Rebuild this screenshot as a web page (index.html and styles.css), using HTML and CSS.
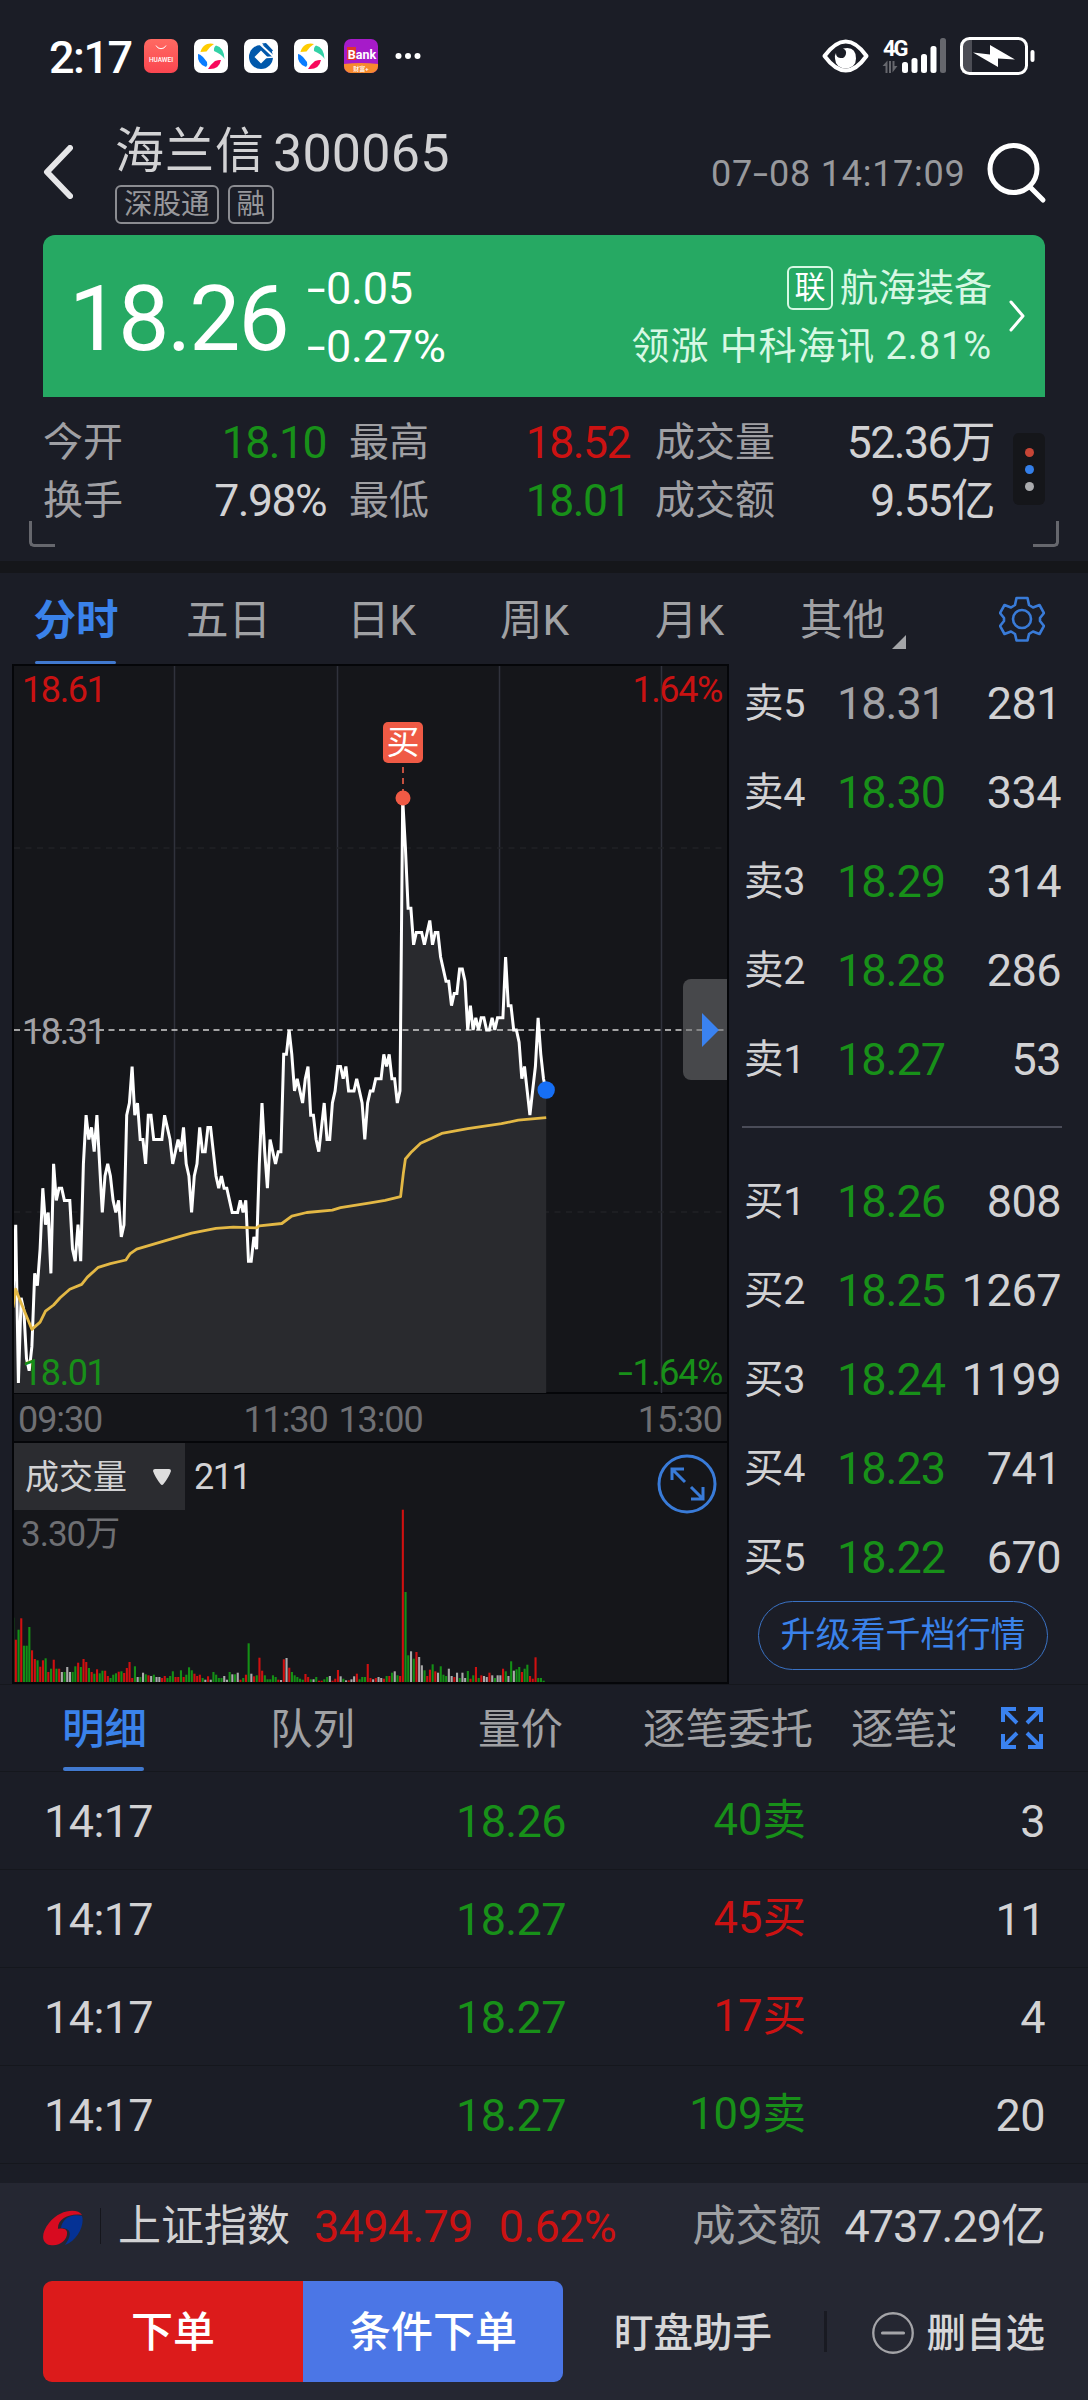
FILE: index.html
```html
<!DOCTYPE html>
<html lang="zh-CN">
<head>
<meta charset="utf-8">
<title>海兰信 300065</title>
<link rel="stylesheet" href="styles.css">
</head>
<body>
<div class="screen">
  <header class="status">
    <span class="clock">2:17</span>
    <div class="apps">
      <svg viewBox="0 0 34 34"><defs><linearGradient id="hw" x2="0" y2="1"><stop stop-color="#ff6a62"/><stop offset="1" stop-color="#fb4650"/></linearGradient></defs><rect width="34" height="34" rx="7" fill="url(#hw)"/><path d="M12 6.500a5.500 5.500 0 0 0 10 0" fill="none" stroke="#fff" stroke-width="1"/><text x="17" y="22.500" class="hw">HUAWEI</text></svg>
      <svg viewBox="0 0 34 34"><rect width="34" height="34" rx="7" fill="#fff"/><path fill="#fc0" d="M6.500 13C8 6.500 14 3 20 5q-5 3-7.500 7.500Z"/><path fill="#32d2a6" d="M20 12q-.5-4 2-5.500 8 2 8.500 13.500-3-5-10.500-8Z"/><path fill="#f8095c" d="M14 30q2-4 7-8 4-1.500 6-1Q25 31 14 30Z"/><path fill="#087cff" d="M4 15q2 0 5 3l4 5q1 3-1 5Q3 25 4 15Z"/></svg>
      <svg viewBox="0 0 34 34"><rect width="34" height="34" rx="7" fill="#fff"/><circle cx="17" cy="18" r="12" fill="#0058ab"/><path d="m17 11.500 6.500 6.500-6.500 6.500-6.500-6.500Z" fill="#fff"/><path d="m16 5 14 13" stroke="#fff" stroke-width="2"/><path d="m22 18.500 8-.5" stroke="#fff" stroke-width="1.500"/><path d="m18 4.500 4-.5 7 7.500-2 2Z" fill="#0058ab"/></svg>
      <svg viewBox="0 0 34 34"><rect width="34" height="34" rx="7" fill="#fff"/><path fill="#fc0" d="M6.500 13C8 6.500 14 3 20 5q-5 3-7.500 7.500Z"/><path fill="#32d2a6" d="M20 12q-.5-4 2-5.500 8 2 8.500 13.500-3-5-10.500-8Z"/><path fill="#f8095c" d="M14 30q2-4 7-8 4-1.500 6-1Q25 31 14 30Z"/><path fill="#087cff" d="M4 15q2 0 5 3l4 5q1 3-1 5Q3 25 4 15Z"/></svg>
      <svg viewBox="0 0 34 34"><defs><clipPath id="bk"><rect width="34" height="34" rx="7"/></clipPath></defs><g clip-path="url(#bk)"><path fill="#a61bc9" d="M0 0h34v34H0z"/><path fill="#f78a2e" d="M0 25q17-2 34 0v9H0z"/><path fill="#e0362c" d="M3 8h9v13H3z"/></g><text x="18" y="20" class="bank">Bank</text><text x="17" y="32" class="wealth">财富+</text></svg>
    </div>
    <svg class="more" viewBox="0 0 26 8" fill="#fff"><circle cx="3.500" cy="4" r="3"/><circle cx="13" cy="4" r="3"/><circle cx="22.500" cy="4" r="3"/></svg>
    <svg class="sys" viewBox="0 0 220 40">
      <path d="M3.500 20Q25-9 45.500 20 25 49 3.500 20Z" fill="none" stroke="#fff" stroke-width="4" stroke-linejoin="round"/>
      <path d="M22 12.500q13-3 13 10 0 9-10.500 10-10-1-10.500-10-.5-3 1-5.500a5 5 0 1 0 7-4.500Z" fill="#fff"/>
      <text x="62" y="20" class="net">4G</text>
      <path d="m61.500 30 5-5.500V37h-2v-7Zm15 0-5 6.500V25h2v5ZM68 25h2v12h-2z" fill="#66676d"/>
      <g fill="#fff"><rect x="81" y="26" width="6" height="11" rx="2.500"/><rect x="90.500" y="22" width="6" height="15" rx="2.500"/><rect x="100" y="18" width="6" height="19" rx="2.500"/><rect x="109.500" y="10" width="6" height="27" rx="2.500"/></g>
      <rect x="119" y="2" width="6" height="35" rx="2.500" fill="#66676d"/>
      <path d="M141 4h10v33h-10z" fill="#4c4d55"/>
      <rect x="140.500" y="2.500" width="65" height="35" rx="8" fill="none" stroke="#fff" stroke-width="3"/>
      <rect x="209.500" y="14" width="4" height="12" rx="2" fill="#fff"/>
      <path d="m152 16.500 17 2V9l25 14.500-17-1V31Z" fill="#fff"/>
    </svg>
  </header>

  <section class="title">
    <svg class="back" viewBox="0 0 30 54"><path d="M27 3 4 27l23 24" fill="none" stroke="#e6e6e8" stroke-width="6" stroke-linecap="round" stroke-linejoin="round"/></svg>
    <div class="name">
      <h1>海兰信<b>300065</b></h1>
      <div class="tags"><span>深股通</span><span>融</span></div>
    </div>
    <time>07<u>-</u>08 14:17:09</time>
    <svg class="search" viewBox="0 0 60 62"><circle cx="26.500" cy="27" r="23.500" fill="none" stroke="#fff" stroke-width="5"/><path d="m43 45 13 13" stroke="#fff" stroke-width="5" stroke-linecap="round"/></svg>
  </section>

  <section class="quote">
    <strong>18.26</strong>
    <div class="change"><span><u>-</u>0.05</span><span><u>-</u>0.27%</span></div>
    <div class="sector">
      <div><i>联</i>航海装备</div>
      <div class="lead">领涨 中科海讯 2.81%</div>
    </div>
    <svg viewBox="0 0 16 34"><path d="m2 3 12 14L2 31" fill="none" stroke="#fff" stroke-width="3" stroke-linecap="round" stroke-linejoin="round"/></svg>
  </section>

  <section class="stats">
    <div class="grid">
      <span>今开</span><em class="down">18.10</em><span>最高</span><em class="up">18.52</em><span>成交量</span><em>52.36万</em>
      <span>换手</span><em>7.98%</em><span>最低</span><em class="down">18.01</em><span>成交额</span><em>9.55亿</em>
    </div>
    <div class="dots"><i></i><i></i><i></i></div>
    <span class="corner left"></span><span class="corner right"></span>
  </section>

  <nav class="periods">
    <a class="on">分时</a><a>五日</a><a>日K</a><a>周K</a><a>月K</a><a class="other">其他</a>
    <svg class="gear" viewBox="0 0 46 46" fill="none" stroke="#397bd8" stroke-width="2.600" stroke-linejoin="round"><path d="M17.500 2h11l1.500 7 4 2.500 6.500-2.500 4.500 8-4 5v3l4 5-4.500 8-6.500-2.500-4 2.500-1.500 6.500h-11L16 38l-4-2.500L5.500 38 1 30l4-5v-3l-4-5 4.500-8 6.500 2.500L16 9Z"/><circle cx="23" cy="23" r="9"/></svg>
  </nav>

  <main class="market">
    <div class="charts">
      <div class="price">
        <svg class="plot" viewBox="0 0 712 727" id="plot"></svg>
        <span class="lab tl up">18.61</span><span class="lab tr up">1.64%</span>
        <span class="lab ml">18.31</span>
        <span class="lab bl down">18.01</span><span class="lab br down"><u>-</u>1.64%</span>
        <span class="buy">买</span>
        <span class="handle"></span>
      </div>
      <div class="axis"><span>09:30</span><span>11:30 13:00</span><span>15:30</span></div>
      <div class="volume">
        <div class="vhead"><span class="pick">成交量<svg viewBox="0 0 18 16"><path d="M2 0h14q2 0 2 2-2 6-7.500 13-1.500 2-3 0Q2 8 0 2q0-2 2-2Z" fill="#ddd"/></svg></span><span>211</span></div>
        <span class="vmax">3.30万</span>
        <svg class="zoomer" viewBox="0 0 60 60" fill="none" stroke="#397bd8" stroke-width="3"><circle cx="30" cy="30" r="28"/><path d="M15 26V15h12M16 16l12 12M34 33l12 12M46 33v12H34"/></svg>
        <svg class="bars" viewBox="0 0 712 173" id="bars"></svg>
      </div>
    </div>
    <aside class="book">
      <div class="side">
        <p><span>卖5</span><em class="flat">18.31</em><b>281</b></p>
        <p><span>卖4</span><em>18.30</em><b>334</b></p>
        <p><span>卖3</span><em>18.29</em><b>314</b></p>
        <p><span>卖2</span><em>18.28</em><b>286</b></p>
        <p><span>卖1</span><em>18.27</em><b>53</b></p>
      </div>
      <hr>
      <div class="side">
        <p><span>买1</span><em>18.26</em><b>808</b></p>
        <p><span>买2</span><em>18.25</em><b>1267</b></p>
        <p><span>买3</span><em>18.24</em><b>1199</b></p>
        <p><span>买4</span><em>18.23</em><b>741</b></p>
        <p><span>买5</span><em>18.22</em><b>670</b></p>
      </div>
      <a class="upgrade">升级看千档行情</a>
    </aside>
  </main>

  <nav class="details">
    <div class="tabs"><a class="on">明细</a><a>队列</a><a>量价</a><a>逐笔委托</a><a>逐笔还原</a></div>
    <svg viewBox="0 0 42 42" fill="none" stroke="#3a82f0" stroke-width="4"><path d="M2 15V2h13M2 2l14 14M27 2h13v13M40 2 26 16M2 27v13h13M2 40l14-14M27 40h13V27M40 40 26 26"/></svg>
  </nav>

  <section class="ticks">
    <p><span>14:17</span><em class="down">18.26</em><em class="down">40卖</em><b>3</b></p>
    <p><span>14:17</span><em class="down">18.27</em><em class="up">45买</em><b>11</b></p>
    <p><span>14:17</span><em class="down">18.27</em><em class="up">17买</em><b>4</b></p>
    <p><span>14:17</span><em class="down">18.27</em><em class="down">109卖</em><b>20</b></p>
  </section>

  <footer>
    <div class="index">
      <svg class="logo" viewBox="0 0 40 36"><path fill="#d80b20" d="M39 5C35-2 17-1 6 13-2 23-2 33 7 35c10 2 18-6 17-13-1-5-9-3-9-3C14 9 27 3 39 5Z"/><path fill="#053295" d="M39 6c3 9-5 25-17 29 6-8 8-17-4-17 1-9 10-15 21-12Z"/></svg>
      <i class="sep"></i>
      <span class="iname">上证指数</span><em class="up ival">3494.79</em><em class="up">0.62%</em>
      <span class="turn">成交额</span><b>4737.29亿</b>
    </div>
    <div class="actions">
      <a class="order">下单</a><a class="cond">条件下单</a>
      <span class="watch">盯盘助手</span><i class="sep"></i>
      <svg viewBox="0 0 40 40" fill="none" stroke="#a4a4a8" stroke-width="2.200"><circle cx="20" cy="20" r="18.800"/><path d="M10 20h20" stroke-width="3" stroke-linecap="round"/></svg>
      <span class="remove">删自选</span>
    </div>
  </footer>
</div>
<script src="chart.js"></script>
</body>
</html>
```
FILE: chart.js
```js
// One value per trading minute, in cents relative to the previous close of 18.31.
const prices = [-22,-16,-29,-22,-23,-27,-28,-26,-20,-21,-18,-13,-16,-15,-20,-11,-14,-13,-13,-14,
-14,-14,-18,-19,-16,-19,-11,-7,-9,-8,-10,-7,-11,-15,-12,-11,-12,-14,-15,-14,
-17,-16,-7,-6,-3,-7,-6,-9,-9,-11,-7,-7,-9,-9,-9,-9,-7,-8,-9,-11,
-10,-9,-10,-8,-11,-12,-15,-12,-11,-8,-10,-10,-8,-8,-10,-12,-13,-12,-13,-13,
-14,-15,-15,-15,-14,-15,-14,-19,-19,-17,-18,-11,-6,-10,-13,-9,-10,-11,-10,-10,
-2,-2,0,-2,-5,-4,-5,-6,-4,-3,-7,-7,-9,-10,-8,-6,-9,-9,-6,-5,
-3,-3,-4,-3,-5,-5,-5,-4,-5,-6,-9,-6,-5,-5,-4,-4,-4,-2,-3,-2,
-4,-4,-6,-5,19,15,10,10,7,8,8,8,7,8,9,7,8,8,6,5,
4,4,2,3,3,5,5,4,0,2,0,1,0,1,1,0,0,1,0,1,
1,1,6,2,2,0,0,-1,-4,-3,-5,-7,-5,-3,1,-2,-4,-5];

// Average price: [minute, cents].
const average = [[0,-22.8],[1,-21.3],[2.6,-22.2],[4.4,-23.2],[7,-24.6],[10,-24],[12,-23.1],[15,-22.6],[17.4,-22],[21,-21.3],
[25.4,-20.9],[27.5,-20.3],[31.5,-19.5],[36,-19.2],[41.7,-18.9],[43.2,-18.4],[45.7,-18],[52,-17.6],[59.5,-17.1],[66,-16.7],
[75,-16.3],[81.4,-16.2],[90,-16.25],[91,-16.1],[99.3,-15.9],[103,-15.3],[108.5,-15],[118,-14.8],[121,-14.6],[132,-14.2],
[137.5,-14],[143.2,-13.7],[144.2,-11.8],[145,-10.6],[147.3,-10],[150.6,-9.3],[154.7,-8.9],[158.4,-8.5],[168,-8.1],
[180.5,-7.7],[186.7,-7.4],[197,-7.2]];

// Volume per minute, height and colour (g falling, r rising, w unchanged).
const volumes = ("193g 127r 157g 191r 109g 109g 165g 95r 69r 65g 46r 65r 71g 30r 40g 67r 40g 40r 30w 30g 45w 30w 30g 47g 58r 45g 69r 60r 42g 30r " +
"25g 38r 26g 34g 34r 18r 12g 22g 26g 31r 32g 27r 42r 60r 12r 47g 15w 15g 28w 23g 20r 18w 22g 15w 15w 12r 18r 12g 18g 32g " +
"15r 15r 35g 15r 22g 44g 35g 25r 18r 22r 12g 7w 17r 7w 30g 22g 12g 12g 18w 7w 30g 23w 23g 28w 7r 12g 22r 116g 25w 17r " +
"20g 73r 34r 20g 8g 8g 20g 15g 7r 6w 68r 72w 43r 30g 20g 15g 10g 7g 24r 15r 8g 8w 15g 4r 4r 8g 15g 18w 4r 10r " +
"36r 17w 10g 5w 5r 8w 17w 25r 8g 15g 15g 54r 12r 8w 12r 15w 12w 10r 18g 18r 28g 32w 20g 18r 517r 270g 80g 92w 70g 90r " +
"75w 50w 35g 18r 37r 53g 32r 28w 47g 22g 18g 40w 18w 15r 28w 12g 28w 12w 33g 10r 20g 45r 12g 20r 18w 15w 28r 20w 12g 20w " +
"20w 40r 32g 18w 62g 34w 38g 45g 30r 40g 52g 18r 10r 74r 12g 12g 4g").split(" ");

const STEP = 2.7065, MID = 364, CENT = 12.17;
const px = m => (m * STEP - 1).toFixed(1);
const py = c => (MID - c * CENT).toFixed(1);
const line = prices.map((c, m) => px(m) + "," + py(c)).join(" ");
const lastX = px(prices.length - 1);

document.getElementById("plot").innerHTML =
  [160, 323, 485, 647].map(x => `<path d="M${x}.500 0V727" stroke="#30323c" stroke-width="1.500"/>`).join("") +
  [182, 546].map(y => `<path d="M0 ${y}H712" stroke="#202226" stroke-width="1.500" stroke-dasharray="6 5.500"/>`).join("") +
  `<polygon points="0,727 ${line} ${lastX},727" fill="#292a2e"/>` +
  `<path d="M0 ${MID}H712" stroke="#d2d2d2" stroke-width="1.500" stroke-dasharray="6 4.500"/>` +
  `<polyline points="${line}" fill="none" stroke="#fff" stroke-width="3"/>` +
  `<polyline points="${average.map(([m, c]) => px(m) + "," + py(c)).join(" ")}" fill="none" stroke="#e3b845" stroke-width="2.800" stroke-linejoin="round"/>` +
  `<path d="M389 101v24" stroke="#c4503f" stroke-width="2" stroke-dasharray="6 5"/>` +
  `<circle cx="389" cy="132" r="7.500" fill="#ef5a45"/>` +
  `<circle cx="${lastX}" cy="424" r="8.700" fill="#166ff5"/>`;

const fill = { g: "#149016", r: "#cf1010", w: "#aaa" };
document.getElementById("bars").innerHTML = volumes.map((v, m) => {
  const h = parseInt(v) / 3;
  return `<rect x="${(m * STEP - 1.9).toFixed(1)}" y="${(173 - h).toFixed(1)}" width="2.1" height="${h.toFixed(1)}" fill="${fill[v.slice(-1)]}"/>`;
}).join("");
```
FILE: styles.css
```css
* { box-sizing: border-box; margin: 0; padding: 0; }
body { background: #1b1d26; color: #d2d2d4; font-family: Roboto, "Noto Sans CJK SC", sans-serif; font-size: 45px; line-height: 1; }
svg { display: block; flex: none; }
em, i { font-style: normal; }
b { font-weight: 400; }
/* wide minus sign */
u { display: inline-block; text-decoration: none; transform: scaleX(1.5); transform-origin: 0 50%; margin-right: .15em; }
.screen { width: 1088px; height: 2400px; overflow: hidden; display: flex; flex-direction: column; }
.screen > * { flex: none; }
.up { color: #cc1212; }
.down { color: #189019; }

.status { height: 112px; display: flex; align-items: center; padding-left: 49px; }
.clock { width: 95px; color: #fff; font-size: 45px; font-weight: 500; letter-spacing: -1.500px; padding-top: 2px; }
.apps { display: flex; gap: 16px; }
.apps svg { width: 34px; height: 34px; }
.hw, .bank, .wealth { fill: #fff; text-anchor: middle; font-size: 6.500px; font-weight: 500; }
.bank { font-size: 12.500px; font-weight: 700; }
.wealth { font-size: 6px; }
.more { width: 26px; height: 8px; margin-left: 17px; }
.sys { width: 220px; height: 40px; margin: 0 0 0 400px; }
.net { fill: #fff; font-size: 22px; font-weight: 700; letter-spacing: -2px; }

.title { height: 123px; display: flex; padding-left: 43px; }
.back { width: 30px; height: 54px; margin-top: 33px; }
.name { width: 638px; padding-left: 42px; }
h1 { display: flex; align-items: center; height: 76px; padding: 2px 0 0; font-size: 49px; font-weight: 400; letter-spacing: 1px; white-space: nowrap; }
h1 b { font-size: 52px; letter-spacing: .2px; padding: 5px 0 0 8px; }
.tags { display: flex; gap: 9px; margin-top: -3px; }
.tags span { height: 39px; border: 2px solid #8b8c91; border-radius: 6px; padding: 0 7px; color: #98989c; font-size: 28.500px; line-height: 36px; }
time { width: 276px; color: #98999d; font-size: 36px; padding-top: 44px; letter-spacing: .75px; white-space: nowrap; }
.search { width: 60px; height: 62px; margin-top: 30px; }

.quote { height: 162px; margin: 0 43px; background: #26a963; border-radius: 12px 12px 0 0; color: #fff; display: flex; }
.quote strong { font-size: 91px; font-weight: 400; padding: 39px 0 0 26px; width: 264px; letter-spacing: -2px; }
.change { font-size: 45px; padding-top: 31px; display: grid; grid-template-rows: 58px 58px; width: 200px; letter-spacing: -.2px; }
.sector { flex: 1; padding-top: 24px; color: #d7f8e4; font-size: 38px; text-align: right; white-space: nowrap; }
.sector div { height: 58px; display: flex; justify-content: flex-end; align-items: center; gap: 7px; white-space: pre; }
.sector .lead { letter-spacing: .9px; }
.sector i { width: 46px; height: 44px; border: 2px solid #d7f8e4; border-radius: 6px; font-size: 31px; color: #fff; text-align: center; line-height: 40px; }
.quote svg { width: 16px; height: 34px; margin: 64px 20px 0 17px; }

.stats { position: relative; height: 164px; display: flex; padding: 17px 43px 0; }
.grid { width: 951px; display: grid; grid-template-columns: 100px 183px 124px 180px 145px 219px; grid-template-rows: 58px 58px; align-items: center; align-content: start; }
.grid span { color: #a0a0a4; font-size: 40px; white-space: nowrap; }
.grid span:nth-of-type(3n+2) { padding-left: 23px; }
.grid span:nth-of-type(3n) { padding-left: 25px; }
.grid em { text-align: right; font-size: 44.500px; letter-spacing: -1.500px; white-space: nowrap; }
.dots { width: 32px; height: 72px; margin: 19px 0 0 19px; border-radius: 6px; background: #15161a; display: flex; flex-direction: column; align-items: center; justify-content: center; gap: 8px; }
.dots i { width: 9px; height: 9px; border-radius: 50%; background: #c74536; }
.dots i:nth-child(2) { background: #347fe9; }
.dots i:nth-child(3) { background: #aaabae; }
.corner { position: absolute; top: 124px; width: 26px; height: 26px; border: solid #66676d; }
.left { left: 29px; border-width: 0 0 3px 3px; border-bottom-left-radius: 5px; }
.right { right: 29px; border-width: 0 3px 3px 0; border-bottom-right-radius: 5px; }

.periods { border-top: 12px solid #15161a; height: 103px; display: grid; grid-template-columns: 152px 153px 153px 153px 157px 186px 134px; align-items: start; }
.periods a { height: 91px; line-height: 95px; text-align: center; color: #a0a1a4; font-size: 42.500px; white-space: nowrap; position: relative; }
.periods .on { color: #3a82ea; font-weight: 700; }
.periods .on::after { content: ""; position: absolute; left: 35px; bottom: 0; width: 81px; height: 3px; border-radius: 2px; background: #4179cf; }
.periods .other { padding-right: 37px; }
.other::after { content: ""; position: absolute; left: 124px; bottom: 15px; border: solid transparent; border-width: 0 0 14px 14px; border-bottom-color: #a4a5a8; }
.gear { width: 46px; height: 46px; margin: 23px 0 0 45px; }

.market { height: 1020px; display: flex; padding-left: 12px; }
.charts { width: 717px; background: #15161a; outline: 2px solid #050609; outline-offset: -2px; }
.price { position: relative; height: 730px; border: 2px solid #050609; }
.plot { width: 712px; height: 727px; }
.lab { position: absolute; font-size: 36px; color: #a2a2a6; letter-spacing: -1.400px; }
.up.lab { color: #c91212; } .down.lab { color: #189019; }
.tl { left: 8px; top: 6px; } .tr { right: 5px; top: 6px; }
.ml { left: 8px; top: 348px; }
.bl { left: 8px; bottom: 1px; } .br { right: 5px; bottom: 1px; }
.buy { position: absolute; left: 369px; top: 56px; width: 40px; height: 41px; background: #ef5a45; border-radius: 5px; color: #fff; font-size: 33px; line-height: 42px; text-align: center; }
.handle { position: absolute; right: 0; top: 313px; width: 44px; height: 101px; border-radius: 8px 0 0 8px; background: #6e6f7190; }
.handle::after { content: ""; position: absolute; left: 19px; top: 34px; border: solid transparent; border-width: 17px 0 17px 17px; border-left-color: #3a82f0; }
.axis { height: 47px; display: grid; grid-template-columns: 1fr auto 1fr; padding: 8px 5px 0 4px; color: #6e6f73; font-size: 36px; letter-spacing: -1.100px; border: solid #050609; border-width: 0 2px; }
.axis span:nth-child(2) { padding-right: 71px; word-spacing: 3px; margin-left: -3px; }
.axis span:last-child { text-align: right; }
.volume { position: relative; height: 243px; border: 2px solid #050609; }
.vhead { display: flex; align-items: center; height: 67px; font-size: 36px; gap: 9px; letter-spacing: -1.500px; }
.pick { width: 171px; height: 67px; background: #2b2c30; display: flex; align-items: center; gap: 26px; padding-left: 11px; font-size: 34px; letter-spacing: 0; }
.pick svg { width: 18px; height: 16px; }
.vmax { display: block; padding: 7px 7px; font-size: 35px; color: #6e6f73; letter-spacing: -1px; }
.zoomer { position: absolute; right: 10px; top: 11px; width: 60px; height: 60px; }
.bars { position: absolute; left: 0; bottom: 0; width: 712px; height: 173px; }

.book { width: 320px; margin-left: 15px; }
.side { display: grid; grid-auto-rows: 89px; height: 467px; margin-top: -5px; }
.side p { display: grid; grid-template-columns: 93px 112px 112px; align-items: center; white-space: nowrap; }
.side span { font-size: 39.500px; letter-spacing: -.3px; }
.side em { font-size: 45px; color: #189019; letter-spacing: -1px; }
.side .flat { color: #a2a2a6; }
.side b { text-align: right; letter-spacing: -.5px; }
hr { border: 0; height: 2px; width: 320px; background: #4a4c58; margin-left: -2px; }
hr + .side { margin-top: 29px; height: 443px; }
.upgrade { display: block; width: 290px; height: 69px; margin: 1px 0 0 14px; border: 1.500px solid #3a72c4; border-radius: 35px; color: #3a82ea; font-size: 35px; line-height: 68px; text-align: center; }

.details { height: 88px; display: flex; border-top: 1px solid #15171d; border-bottom: 1px solid #15171d; }
.tabs { width: 955px; overflow: hidden; display: flex; padding-left: 62px; font-size: 42.500px; color: #a0a1a4; white-space: nowrap; }
.tabs a { width: 208px; flex: none; line-height: 89px; }
.tabs a:nth-child(3) { width: 165px; }
.tabs .on { color: #3a82ea; position: relative; font-weight: 500; }
.tabs .on::after { content: ""; position: absolute; left: 1px; bottom: 0; width: 81px; height: 4px; background: #4179cf; border-radius: 2px; }
.details svg { width: 42px; height: 42px; margin: 22px 0 0 46px; }

.ticks { height: 411px; overflow: hidden; }
.ticks p { height: 98px; border-bottom: 1px solid #15171d; padding: 1px 43px 0 44px; display: grid; grid-template-columns: 322px 200px 240px 239px; align-items: center; }
.ticks p > :nth-child(2), .ticks p > :nth-child(3), .ticks b { text-align: right; }
.ticks span, .ticks em, .ticks b { letter-spacing: -.6px; }
.ticks em:nth-child(3) { font-size: 43.500px; letter-spacing: 0; }

footer { height: 217px; background: #252732; }
.index { height: 98px; display: flex; align-items: center; padding: 0 43px 12px; white-space: nowrap; }
.logo { width: 40px; height: 36px; margin-top: 3px; }
.index .sep { width: 1px; height: 36px; background: #15161c; margin: 0 17px; }
.iname, .turn { font-size: 43px; }
.index em, .index b { letter-spacing: -.7px; }
.ival { margin: 0 26px 0 24px; }
.turn { color: #a0a1a4; margin-left: auto; }
.index b { margin-left: 23px; letter-spacing: -1px; }
.actions { display: flex; align-items: center; padding: 0 43px; height: 101px; white-space: nowrap; color: #d6d6d8; }
.actions a { width: 260px; height: 101px; line-height: 103px; color: #fff; font-size: 42px; font-weight: 500; text-align: center; background: #dc1b1b; border-radius: 9px 0 0 9px; }
.actions .cond { background: #4b76e6; border-radius: 0 9px 9px 0; }
.watch, .remove { font-size: 39.500px; font-weight: 500; padding-top: 4px; }
.watch { width: 261px; padding-left: 51px; }
.actions .sep { width: 3px; height: 41px; background: #191a22; }
.actions svg { width: 42px; height: 42px; margin: 3px 0 0 45px; }
.remove { margin-left: auto; }
```
